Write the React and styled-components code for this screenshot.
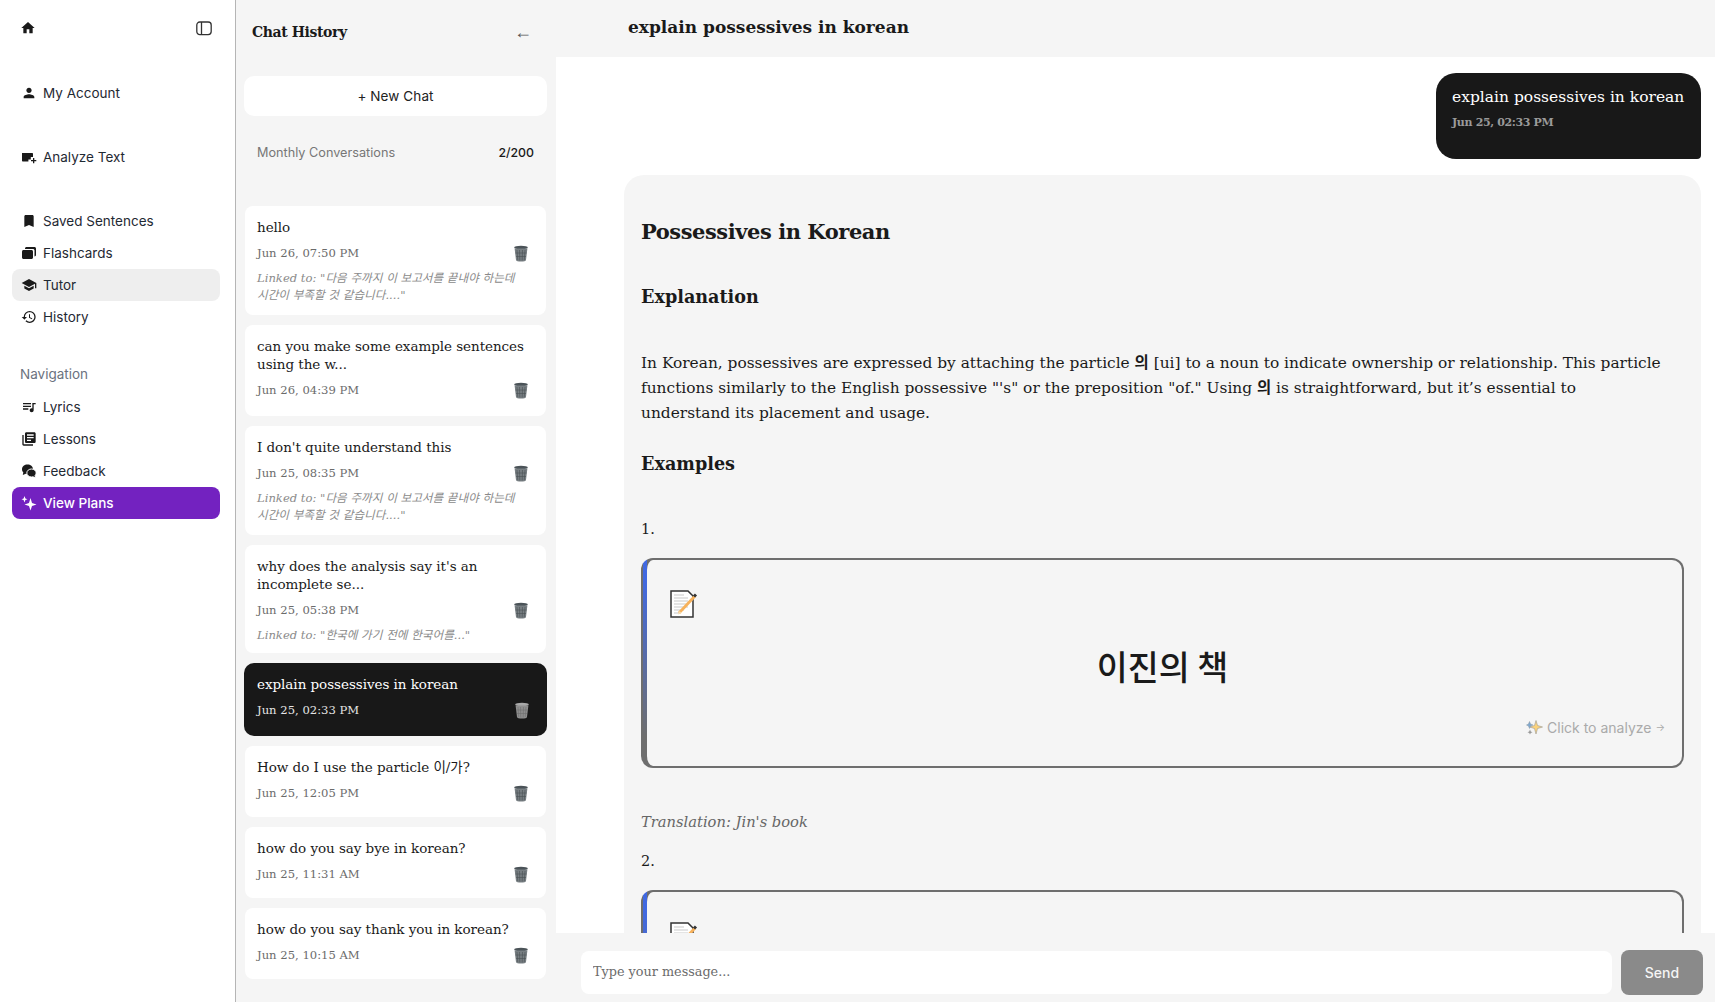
import React from "react";
import styled, { createGlobalStyle } from "styled-components";
import {
  MdHome,
  MdPerson,
  MdBookmark,
  MdSchool,
  MdHistory,
  MdQueueMusic,
  MdLibraryBooks
} from "react-icons/md";

const SERIF = `"DejaVu Serif", "Noto Sans CJK KR", serif`;
const SANS = `Inter, "Noto Sans CJK KR", sans-serif`;

const chats = [
  { title: "hello", date: "Jun 26, 07:50 PM", linked: 'Linked to: "다음 주까지 이 보고서를 끝내야 하는데 시간이 부족할 것 같습니다...."', height: 109 },
  { title: "can you make some example sentences using the w...", date: "Jun 26, 04:39 PM", height: 91 },
  { title: "I don't quite understand this", date: "Jun 25, 08:35 PM", linked: 'Linked to: "다음 주까지 이 보고서를 끝내야 하는데 시간이 부족할 것 같습니다...."', height: 109 },
  { title: "why does the analysis say it's an incomplete se...", date: "Jun 25, 05:38 PM", linked: 'Linked to: "한국에 가기 전에 한국어를..."', height: 108 },
  { title: "explain possessives in korean", date: "Jun 25, 02:33 PM", active: true, height: 73 },
  { title: "How do I use the particle 이/가?", date: "Jun 25, 12:05 PM", height: 71 },
  { title: "how do you say bye in korean?", date: "Jun 25, 11:31 AM", height: 71 },
  { title: "how do you say thank you in korean?", date: "Jun 25, 10:15 AM", height: 71 }
];

function FlashIcon() {
  return (
    <svg width="16" height="16" viewBox="0 0 16 16" fill="#1a1a1a">
      <path d="M1 6.5C1 5.7 1.7 5 2.5 5h8c.8 0 1.5.7 1.5 1.5v6c0 .8-.7 1.5-1.5 1.5h-8C1.7 14 1 13.3 1 12.5z" />
      <path d="M4 3.5C4 2.7 4.7 2 5.5 2h8c.8 0 1.5.7 1.5 1.5V10c0 .8-.6 1.4-1.5 1.5V5.5c0-1-.8-1.5-1.5-1.5H4z" />
    </svg>
  );
}

function AnalyzeIcon() {
  return (
    <svg width="16" height="16" viewBox="0 0 16 16" fill="#1a1a1a">
      <path d="M1 4h10.3c.4 0 .7.3.7.7V8H9.8v2.4H7.4v2.100H1.700c-.4 0-.7-.3-.7-.7z" />
      <path d="M12 9h1.3v2h2v1.300h-2v2H12v-2h-2V11h2z" />
    </svg>
  );
}

function PanelIcon() {
  return (
    <svg width="16" height="15" viewBox="0 0 16 15" fill="none" stroke="#333" strokeWidth="1.3">
      <rect x="0.8" y="1" width="14.4" height="12.6" rx="3" />
      <path d="M5.5 1v12.6" />
    </svg>
  );
}

function FeedbackIcon() {
  return (
    <svg width="16" height="16" viewBox="0 0 16 16">
      <path d="M6.5 1.5C3.5 1.5 1 3.500 1 6.200c0 1.200.5 2.300 1.300 3.100L1.800 12l3-1.200c.6.200 1.100.3 1.700.3 3 0 5.500-2.100 5.500-4.900S9.500 1.500 6.500 1.500z" fill="#1a1a1a" />
      <path d="M10.500 6C8 6 5.800 7.700 5.800 10s2.200 4 4.700 4c.5 0 1-.1 1.400-.2l2.700 1-.5-2.400c.7-.7 1.100-1.500 1.100-2.400C15.200 7.700 13 6 10.500 6z" fill="#1a1a1a" stroke="#fff" strokeWidth="1" />
    </svg>
  );
}

function PlansIcon() {
  return (
    <svg width="16" height="16" viewBox="0 0 16 16" fill="#fff">
      <path d="M9.500 3 11 8 15.500 9.500 11 11 9.500 15.500 8 11 3.500 9.500 8 8z" />
      <path d="M3.500 1 4.400 3.400 6.500 4.200 4.400 5 3.500 7.400 2.600 5 .5 4.200 2.600 3.400z" />
    </svg>
  );
}

function TrashIcon({ light }) {
  return (
    <svg width="16" height="17" viewBox="0 0 16 17">
      <ellipse cx="8" cy="2.6" rx="6.8" ry="1.8" fill={light ? "#a8a8a8" : "#4b5358"} />
      <path d="M1.600 3.400 3 15c.1 1 2.200 1.600 5 1.600s4.900-.6 5-1.600l1.400-11.600z" fill={light ? "#8e8e8e" : "#777e82"} />
      <path d="M4 5l.7 10M6.500 5l.3 10.500M9.500 5l-.3 10.500M12 5l-.7 10M2.500 8h11M3 11.500h10" stroke={light ? "#6e6e6e" : "#4a5054"} strokeWidth="0.6" />
    </svg>
  );
}

function MemoIcon() {
  return (
    <svg width="29" height="28" viewBox="0 0 29 28">
      <path d="M1 1h17l5 5v21H1z" fill="#fff" stroke="#333" strokeWidth="1.5" />
      <path d="M4 5h10M4 8h14M4 11h14M4 14h12M4 17h14M4 20h10M4 23h6" stroke="#c9c9c9" strokeWidth="1" />
      <path d="M9 23 25 6" stroke="#f7b25c" strokeWidth="2.8" />
      <path d="M24 6.500 26 4.500" stroke="#333" strokeWidth="3" />
      <path d="M8 24.500 9.500 21l2 2z" fill="#f5deb0" />
    </svg>
  );
}

function SparkleIcon() {
  return (
    <svg width="17" height="16" viewBox="0 0 17 16">
      <path d="M10 1.500 11.500 6.500 16.500 8 11.500 9.500 10 15 8.500 9.500 3.500 8 8.500 6.500z" fill="#fbd27a" stroke="#a8a39a" strokeWidth="0.7" />
      <path d="M3.500 2.500 4.500 5 7 6 4.500 7 3.500 9.500 2.500 7 .5 6 2.500 5z" fill="#7fa8d0" stroke="#8b98a5" strokeWidth="0.5" />
      <path d="M4 10.500 4.800 12.500 6.500 13.200 4.800 14 4 15.500 3.200 14 1.500 13.200 3.200 12.500z" fill="#9a9a9a" />
    </svg>
  );
}

function ChatCard({ chat }) {
  return (
    <Card $active={chat.active} $height={chat.height}>
      <CardTitle $active={chat.active}>{chat.title}</CardTitle>
      <CardMeta>
        <CardDate $active={chat.active}>{chat.date}</CardDate>
        <TrashIcon light={chat.active} />
      </CardMeta>
      {chat.linked && <Linked>{chat.linked}</Linked>}
    </Card>
  );
}

function ExampleCard({ text }) {
  return (
    <Example>
      <MemoRow>
        <MemoIcon />
      </MemoRow>
      <ExampleText>{text}</ExampleText>
      <AnalyzeRow>
        <SparkleIcon />
        Click to analyze <SmallArrow>→</SmallArrow>
      </AnalyzeRow>
    </Example>
  );
}

export default function App() {
  return (
    <>
      <GlobalStyle />
      <Page>
        <Sidebar>
          <SideTop>
            <MdHome size={16} />
            <PanelIcon />
          </SideTop>
          <NavGroup $bottom={32}>
            <NavRow><MdPerson size={16} />My Account</NavRow>
          </NavGroup>
          <NavGroup $bottom={32}>
            <NavRow><AnalyzeIcon />Analyze Text</NavRow>
          </NavGroup>
          <NavGroup $bottom={25}>
            <NavRow><MdBookmark size={16} />Saved Sentences</NavRow>
            <NavRow><FlashIcon />Flashcards</NavRow>
            <NavRow $selected><MdSchool size={16} />Tutor</NavRow>
            <NavRow><MdHistory size={16} />History</NavRow>
          </NavGroup>
          <NavTitle>Navigation</NavTitle>
          <NavGroup>
            <NavRow><MdQueueMusic size={16} />Lyrics</NavRow>
            <NavRow><MdLibraryBooks size={16} />Lessons</NavRow>
            <NavRow><FeedbackIcon />Feedback</NavRow>
            <NavRow $plans><PlansIcon />View Plans</NavRow>
          </NavGroup>
        </Sidebar>

        <HistoryPanel>
          <PanelHead>
            <PanelTitle>Chat History</PanelTitle>
            <BackArrow>←</BackArrow>
          </PanelHead>
          <NewChat>+ New Chat</NewChat>
          <Usage>
            <UsageLabel>Monthly Conversations</UsageLabel>
            <UsageCount>2/200</UsageCount>
          </Usage>
          <CardList>
            {chats.map((c) => (
              <ChatCard key={c.title} chat={c} />
            ))}
          </CardList>
        </HistoryPanel>

        <Main>
          <MainHead>explain possessives in korean</MainHead>
          <Messages>
            <UserBubble>
              <BubbleText>explain possessives in korean</BubbleText>
              <BubbleDate>Jun 25, 02:33 PM</BubbleDate>
            </UserBubble>
            <Answer>
              <H1>Possessives in Korean</H1>
              <H2 $top={37} $bottom={41}>Explanation</H2>
              <Para>
                In Korean, possessives are expressed by attaching the particle <b>의</b> [ui] to a noun to indicate ownership or relationship. This particle functions similarly to the English possessive "'s" or the preposition "of." Using <b>의</b> is straightforward, but it’s essential to understand its placement and usage.
              </Para>
              <H2 $top={24} $bottom={41}>Examples</H2>
              <ListNumber>1.</ListNumber>
              <ExampleCard text="이진의 책" />
              <Translation>Translation: Jin's book</Translation>
              <ListNumber>2.</ListNumber>
              <ExampleCard text="친구의 집" />
            </Answer>
          </Messages>
          <InputBar>
            <MessageInput placeholder="Type your message..." />
            <SendButton>Send</SendButton>
          </InputBar>
        </Main>
      </Page>
    </>
  );
}

const GlobalStyle = createGlobalStyle`
  html, body {
    margin: 0;
    padding: 0;
    height: 100%;
    overflow: hidden;
    background: #fff;
  }
  * {
    box-sizing: border-box;
  }
`;

const Page = styled.div`
  display: flex;
  width: 1715px;
  height: 1002px;
  overflow: hidden;
`;

const Sidebar = styled.aside`
  width: 236px;
  flex-shrink: 0;
  padding: 0 15px 0 12px;
  border-right: 1px solid #b5b5b5;
  font-family: ${SANS};
  background: #fff;
`;

const SideTop = styled.div`
  display: flex;
  align-items: center;
  justify-content: space-between;
  height: 57px;
  padding: 0 8px 1px 8px;
  color: #1a1a1a;
  margin-bottom: 20px;
`;

const NavGroup = styled.div`
  margin-bottom: ${(p) => p.$bottom || 0}px;
`;

const NavRow = styled.div`
  display: flex;
  align-items: center;
  gap: 6px;
  height: 32px;
  padding: 0 10px 0 9px;
  border-radius: 8px;
  font-size: 13.5px;
  color: ${(p) => (p.$plans ? "#fff" : "#1f2933")};
  font-weight: ${(p) => (p.$plans ? 500 : 400)};
  background: ${(p) => (p.$selected ? "#eeeeee" : p.$plans ? "#7322c0" : "transparent")};
  svg {
    flex-shrink: 0;
    color: ${(p) => (p.$plans ? "#fff" : "#1a1a1a")};
  }
`;

const NavTitle = styled.div`
  height: 32px;
  line-height: 32px;
  padding-left: 8px;
  margin-bottom: 1px;
  font-size: 13.5px;
  color: #6b7280;
`;

const HistoryPanel = styled.section`
  width: 320px;
  flex-shrink: 0;
  height: 1002px;
  padding: 0 9px 0 8px;
  background: #f5f5f5;
`;

const PanelHead = styled.div`
  display: flex;
  align-items: center;
  justify-content: space-between;
  height: 64px;
  padding: 0 15px 0 8px;
  margin-bottom: 12px;
`;

const PanelTitle = styled.h2`
  margin: 0;
  font-family: ${SERIF};
  font-weight: 700;
  font-size: 14px;
  letter-spacing: -0.4px;
  color: #1a1a1a;
`;

const BackArrow = styled.span`
  font-family: "Liberation Sans", sans-serif;
  font-size: 18px;
  color: #555;
`;

const NewChat = styled.button`
  display: block;
  width: 303px;
  height: 40px;
  border: 0;
  border-radius: 10px;
  background: #fff;
  font-family: ${SANS};
  font-size: 13.5px;
  letter-spacing: 0.1px;
  color: #222;
`;

const Usage = styled.div`
  display: flex;
  align-items: center;
  justify-content: space-between;
  height: 37px;
  margin-top: 18px;
  margin-bottom: 35px;
  padding: 0 13px;
  font-family: ${SANS};
  font-size: 12.7px;
`;

const UsageLabel = styled.span`
  color: #777;
`;

const UsageCount = styled.span`
  color: #1a1a1a;
  font-size: 12.3px;
  font-weight: 500;
`;

const CardList = styled.div`
  display: flex;
  flex-direction: column;
  gap: 10px;
  padding-left: 1px;
`;

const Card = styled.div`
  width: ${(p) => (p.$active ? 303 : 301)}px;
  height: ${(p) => p.$height}px;
  margin-left: ${(p) => (p.$active ? -1 : 0)}px;
  padding: 12px 13px 0 ${(p) => (p.$active ? 13 : 12)}px;
  border-radius: ${(p) => (p.$active ? 10 : 8)}px;
  background: ${(p) => (p.$active ? "#181818" : "#fff")};
  font-family: ${SERIF};
`;

const CardTitle = styled.div`
  font-size: 13.5px;
  line-height: 18px;
  letter-spacing: -0.05px;
  color: ${(p) => (p.$active ? "#fff" : "#1a1a1a")};
`;

const CardMeta = styled.div`
  display: flex;
  align-items: center;
  justify-content: space-between;
  margin-top: 8px;
  padding-right: 4px;
  height: 18px;
`;

const CardDate = styled.span`
  font-size: 11.6px;
  font-weight: ${(p) => (p.$active ? 500 : 400)};
  color: ${(p) => (p.$active ? "#e5e5e5" : "#6b6b6b")};
`;

const Linked = styled.div`
  margin-top: 8px;
  font-size: 11.6px;
  line-height: 17px;
  font-style: italic;
  word-break: keep-all;
  color: #8a8a8a;
`;

const Main = styled.main`
  flex: 1;
  min-width: 0;
  height: 1002px;
  display: flex;
  flex-direction: column;
`;

const MainHead = styled.header`
  height: 57px;
  flex-shrink: 0;
  padding: 16px 0 0 72px;
  background: #f5f5f5;
  font-family: ${SERIF};
  font-weight: 700;
  font-size: 17px;
  line-height: 22px;
  color: #1a1a1a;
`;

const Messages = styled.div`
  flex: 1;
  min-height: 0;
  overflow: hidden;
  padding: 16px 14px 0 68px;
  display: flex;
  flex-direction: column;
  align-items: flex-end;
  font-family: ${SERIF};
`;

const UserBubble = styled.div`
  width: 265px;
  height: 86px;
  flex-shrink: 0;
  padding: 14px 16px;
  border-radius: 20px 20px 4px 20px;
  background: #181818;
`;

const BubbleText = styled.div`
  font-size: 15.5px;
  line-height: 20px;
  color: #fff;
  white-space: nowrap;
`;

const BubbleDate = styled.div`
  margin-top: 9px;
  font-size: 11px;
  font-weight: 700;
  letter-spacing: -0.35px;
  color: #9a9a9a;
`;

const Answer = styled.div`
  width: 100%;
  margin-top: 16px;
  flex-shrink: 0;
  padding: 42px 17px 0 17px;
  border-radius: 20px;
  background: #f5f5f5;
  color: #1a1a1a;
`;

const H1 = styled.h1`
  margin: 0;
  font-size: 21px;
  letter-spacing: -0.45px;
  line-height: 30px;
  font-weight: 700;
`;

const H2 = styled.h2`
  margin: ${(p) => p.$top}px 0 ${(p) => p.$bottom}px;
  font-size: 17.6px;
  line-height: 26px;
  font-weight: 700;
`;

const Para = styled.p`
  margin: 0;
  padding-right: 18px;
  font-size: 15.4px;
  line-height: 25.2px;
`;

const ListNumber = styled.div`
  font-size: 14.5px;
  line-height: 22px;
  margin-bottom: 18px;
`;

const Example = styled.div`
  height: 210px;
  padding: 30px 17px 0 13px;
  margin-bottom: 43px;
  border: 2px solid transparent;
  border-left-width: 6px;
  border-radius: 12px;
  background:
    linear-gradient(#f5f5f5, #f5f5f5) padding-box,
    linear-gradient(#6e6e6e, #6e6e6e) left top / 2px 100% no-repeat border-box,
    linear-gradient(#4169e1 10%, #6e6e6e 85%) left top / 6px 100% no-repeat border-box,
    linear-gradient(#6e6e6e, #6e6e6e) border-box;
`;

const MemoRow = styled.div`
  height: 28px;
  margin-left: 10px;
`;

const ExampleText = styled.div`
  margin-top: 25px;
  text-align: center;
  font-family: "Noto Sans CJK KR", sans-serif;
  font-size: 33.7px;
  line-height: 46px;
  font-weight: 500;
  color: #1a1a1a;
`;

const AnalyzeRow = styled.div`
  display: flex;
  align-items: center;
  justify-content: flex-end;
  gap: 4px;
  margin-top: 30px;
  font-family: ${SANS};
  font-size: 14px;
  color: #aaa;
`;

const SmallArrow = styled.span`
  font-size: 10px;
`;

const Translation = styled.div`
  font-size: 14.7px;
  font-style: italic;
  line-height: 22px;
  color: #666;
  margin-bottom: 17px;
`;

const InputBar = styled.div`
  height: 69px;
  flex-shrink: 0;
  display: flex;
  align-items: flex-start;
  gap: 9px;
  padding: 18px 12px 0 25px;
  background: #f5f5f5;
`;

const MessageInput = styled.input`
  flex: 1;
  height: 43px;
  border: 0;
  border-radius: 8px;
  padding: 0 12px 3px;
  background: #fff;
  font-family: ${SERIF};
  font-size: 12.8px;
  outline: none;
  &::placeholder {
    color: #6b6b6b;
  }
`;

const SendButton = styled.button`
  width: 82px;
  height: 45px;
  margin-top: -1px;
  border: 0;
  border-radius: 8px;
  background: #8a8a8a;
  color: #f5f5f5;
  font-family: ${SANS};
  font-size: 14px;
  font-weight: 500;
`;
